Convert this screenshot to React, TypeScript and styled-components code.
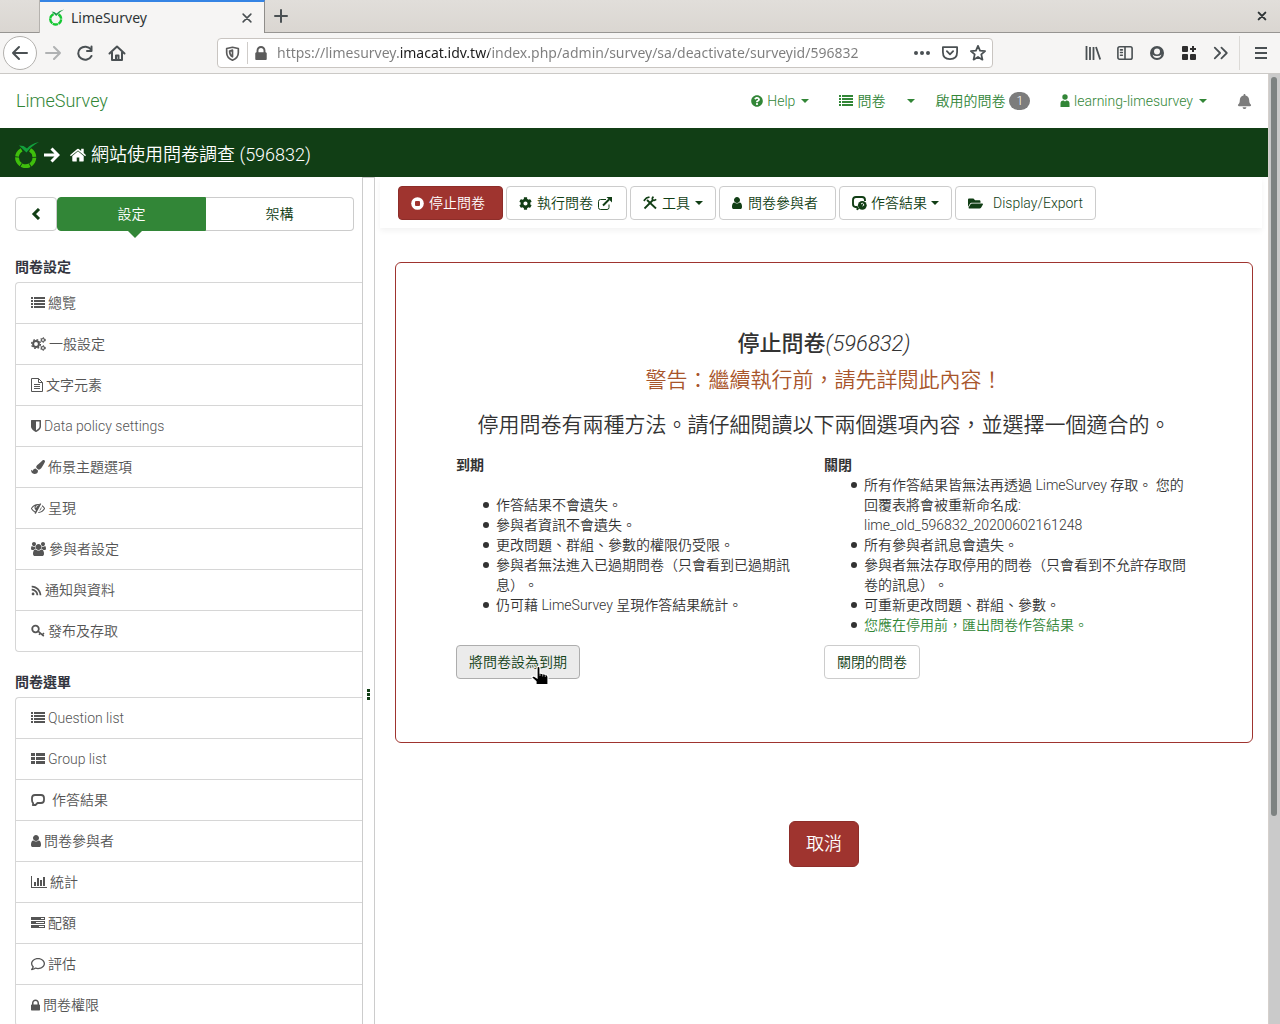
import React from "react";
import styled, { createGlobalStyle, css } from "styled-components";
import {
  FaBell,
  FaCog,
  FaFolderOpen,
  FaPaintBrush,
  FaQuestionCircle,
  FaRegComment,
  FaRss,
} from "react-icons/fa";

const colors = {
  green: "#328637",
  darkGreen: "#113e15",
  danger: "#9f342f",
  line: "#cccccc",
  text: "#333333",
  muted: "#555555",
  chrome: "#f6f5f4",
  chromeInk: "#4a5053",
};

const GlobalStyle = createGlobalStyle`
  *, *::before, *::after { box-sizing: border-box; }
  body {
    margin: 0;
    background: #fff;
    color: ${colors.text};
    font: 350 14px/20px Roboto, "Noto Sans CJK TC", sans-serif;
    text-spacing-trim: space-all;
  }
  button, input { font: inherit; }
  a { color: inherit; text-decoration: none; }
  svg { display: block; flex: none; }
`;

/* ---------- icons ---------- */

type IconProps = { w?: number; h?: number };

const Fa4 = ({ d, w = 14, h = 14, box = "0 0 1792 1792" }: IconProps & { d: string; box?: string }) => (
  <svg width={w} height={h} viewBox={box} fill="currentColor" aria-hidden="true">
    <path d={d} />
  </svg>
);

const UserIcon = () => (
  <Fa4
    w={10}
    h={12}
    box="256 128 1280 1536"
    d="M1536 1399q0 109-62.5 187t-150.5 78h-854q-88 0-150.5-78t-62.5-187q0-85 8.5-160.5t31.5-152 58.5-131 94-89 134.5-34.5q131 128 313 128t313-128q76 0 134.5 34.5t94 89 58.5 131 31.5 152 8.5 160.5zm-256-887q0 159-112.5 271.5t-271.5 112.5-271.5-112.5-112.5-271.5 112.5-271.5 271.5-112.5 271.5 112.5 112.5 271.5z"
  />
);

const UsersIcon = () => (
  <Fa4
    w={15}
    h={14}
    box="0 0 1920 1792"
    d="M593 896q-162 5-265 128h-134q-82 0-138-40.5t-56-118.5q0-353 124-353 6 0 43.5 21t97.5 42.5 119 21.5q67 0 133-23-5 37-5 66 0 139 81 256zm1071 637q0 120-73 189.5t-194 69.5h-874q-121 0-194-69.5t-73-189.5q0-53 3.5-103.5t14-109 26.5-108.5 43-97.5 62-81 85.5-53.5 111.5-20q10 0 43 21.5t73 48 107 48 135 21.5 135-21.5 107-48 73-48 43-21.5q61 0 111.5 20t85.5 53.5 62 81 43 97.5 26.5 108.5 14 109 3.5 103.5zm-1024-1277q0 106-75 181t-181 75-181-75-75-181 75-181 181-75 181 75 75 181zm704 384q0 159-112.5 271.5t-271.5 112.5-271.5-112.5-112.5-271.5 112.5-271.5 271.5-112.5 271.5 112.5 112.5 271.5zm576 225q0 78-56 118.5t-138 40.5h-134q-103-123-265-128 81-117 81-256 0-29-5-66 66 23 133 23 59 0 119-21.5t97.5-42.5 43.5-21q124 0 124 353zm-128-609q0 106-75 181t-181 75-181-75-75-181 75-181 181-75 181 75 75 181z"
  />
);

const PersonIcon = () => (
  <svg width="10" height="14" viewBox="0 0 10 14" fill="currentColor" aria-hidden="true">
    <circle cx="5" cy="3" r="2.7" />
    <path d="M.5 13V9.500q0-3 3-3h.3L5 7.500l1.200-1h.3q3 0 3 3V13z" />
  </svg>
);

const ShieldIcon = () => (
  <Fa4
    w={10}
    h={12}
    box="256 128 1280 1536"
    d="M1344 960v-640h-448v1137q119-63 213-137 235-184 235-360zm192-768v768q0 86-33.500 170.500t-83 150-118 127.500-126.500 103-121 77.500-89.500 49.500-42.500 20q-12 6-26 6t-26-6q-16-7-42.500-20t-89.500-49.500-121-77.500-126.500-103-118-127.500-83-150-33.500-170.500v-768q0-26 19-45t45-19h1152q26 0 45 19t19 45z"
  />
);

const LockIcon = ({ w = 9, h = 12 }: IconProps) => (
  <Fa4
    w={w}
    h={h}
    box="320 128 1152 1408"
    d="M640 768h512v-192q0-106-75-181t-181-75-181 75-75 181v192zm832 96v576q0 40-28 68t-68 28h-960q-40 0-68-28t-28-68v-576q0-40 28-68t68-28h32v-192q0-184 132-316t316-132 316 132 132 316v192h32q40 0 68 28t28 68z"
  />
);

const EyeSlashIcon = () => (
  <Fa4
    w={14}
    h={14}
    d="M555 1335l78-141q-87-63-136-159t-49-203q0-121 61-225-229 117-381 353 167 258 427 375zm389-759q0-20-14-34t-34-14q-125 0-214.500 89.500t-89.500 214.500q0 20 14 34t34 14 34-14 14-34q0-86 61-147t147-61q20 0 34-14t14-34zm363-191q0 7-1 9-106 189-316 567t-315 566l-49 89q-10 16-28 16-12 0-134-70-16-10-16-28 0-12 44-87-143-65-263.500-173t-208.500-245q-20-31-20-69t20-69q153-235 380-371t496-136q89 0 180 17l54-97q10-16 28-16 5 0 18 6t31 15.500 33 18.500 31.500 18.500 19.500 11.500q16 10 16 27zm37 447q0 139-79 253.500t-209 164.500l280-502q8 45 8 84zm448 128q0 35-20 69-39 64-109 145-150 172-347.500 267t-419.500 95l74-132q212-18 392.500-137t301.500-307q-115-179-282-294l63-112q95 64 182.500 153t144.500 184q20 34 20 69z"
  />
);

const HomeIcon = () => (
  <Fa4
    w={16}
    h={14}
    box="90 240 1612 1296"
    d="M1472 992v480q0 26-19 45t-45 19h-384v-384h-256v384h-384q-26 0-45-19t-19-45v-480q0-1 .5-3t.5-3l575-474 575 474q1 2 1 6zm223-69l-62 74q-8 9-21 11h-3q-13 0-21-7l-692-577-692 577q-12 8-24 7-13-2-21-11l-62-74q-8-10-7-23.500t11-21.500l719-599q32-26 76-26t76 26l244 204v-195q0-14 9-23t23-9h192q14 0 23 9t9 23v408l219 182q10 8 11 21.500t-7 23.500z"
  />
);

const ListIcon = () => (
  <svg width="14" height="12" viewBox="0 0 14 12" fill="currentColor" aria-hidden="true">
    <path d="M0 0h2v2H0zM3 0h11v2H3zM0 3h2v2H0zM3 3h11v2H3zM0 6h2v2H0zM3 6h11v2H3zM0 9h2v2H0zM3 9h11v2H3z" />
  </svg>
);

const ThListIcon = () => (
  <svg width="14" height="12" viewBox="0 0 14 12" fill="currentColor" aria-hidden="true">
    <path d="M0 0h4v3H0zM5 0h9v3H5zM0 4h4v3H0zM5 4h9v3H5zM0 8h4v3H0zM5 8h9v3H5z" />
  </svg>
);

const CogsIcon = () => (
  <svg width="15" height="14" viewBox="0 0 15 14" fill="none" stroke="currentColor" aria-hidden="true">
    <circle cx="5" cy="7" r="2.900" strokeWidth="2" />
    <circle cx="5" cy="7" r="4.400" strokeWidth="1.400" strokeDasharray="1.700 1.755" />
    <circle cx="12" cy="3" r="1.500" strokeWidth="1.200" />
    <circle cx="12" cy="3" r="2.400" strokeDasharray="1.200 1.300" />
    <circle cx="12" cy="11" r="1.500" strokeWidth="1.200" />
    <circle cx="12" cy="11" r="2.400" strokeDasharray="1.200 1.300" />
  </svg>
);

const FileIcon = () => (
  <svg width="12" height="14" viewBox="0 0 12 14" fill="none" stroke="currentColor" aria-hidden="true">
    <path d="M.5.500h7l4 4v9H.500zM7.500.500v4h4M3 6.500h6M3 8.500h6M3 10.500h6" />
  </svg>
);

const KeyIcon = () => (
  <svg width="14" height="14" viewBox="0 0 14 14" fill="none" stroke="currentColor" strokeWidth="1.800" aria-hidden="true">
    <circle cx="4.500" cy="5" r="3.300" />
    <path d="M7 7.200l5.800 5M9.300 9.200l-1.300 1.500M11.300 10.900l1.600-1.900" strokeWidth="1.600" />
  </svg>
);

const BubbleIcon = () => (
  <svg width="14" height="13" viewBox="0 0 14 13" fill="none" stroke="currentColor" strokeWidth="1.800" aria-hidden="true">
    <path d="M4 1h6q3 0 3 3v2q0 3-3 3H6.500L4.500 11H1.800q.8-1 .2-2Q1 8 1 6V4q0-3 3-3z" strokeLinejoin="round" />
  </svg>
);

const BarChartIcon = () => (
  <svg width="16" height="12" viewBox="0 0 16 12" fill="currentColor" aria-hidden="true">
    <path d="M0 0h1v11h15v1H0zM3 6h2v4H3zM6 2h2v8H6zM9 4h2v6H9zM12 1h2v9h-2z" />
  </svg>
);

const TasksIcon = () => (
  <svg width="14" height="12" viewBox="0 0 14 12" fill="currentColor" fillRule="evenodd" aria-hidden="true">
    <path d="M0 0h14v3H0zM10 1v1h3V1zM0 4h14v3H0zM5 5v1h8V5zM0 8h14v3H0zM8 9v1h5V9z" />
  </svg>
);

const StopIcon = () => (
  <svg width="13" height="13" viewBox="0 0 13 13" aria-hidden="true">
    <circle cx="6.500" cy="6.500" r="6.300" fill="currentColor" />
    <rect x="4" y="4" width="5" height="5" rx="1" fill={colors.danger} />
  </svg>
);

const ExternalIcon = () => (
  <svg width="14" height="13" viewBox="0 0 14 13" fill="none" stroke="currentColor" aria-hidden="true">
    <path d="M8 2.500H2.500q-2 0-2 2v6q0 2 2 2H9q2 0 2-2V7.500" />
    <path d="M5 8.500l6-6" strokeWidth="1.900" />
    <path d="M8.500 0H14v5.500z" fill="currentColor" stroke="none" />
  </svg>
);

const ToolsIcon = () => (
  <svg width="14" height="14" viewBox="0 0 14 14" fill="none" stroke="currentColor" aria-hidden="true">
    <path d="M1.500 12.500l8.500-8.500" strokeWidth="1.800" />
    <path d="M10.500 .8q-2 1.500-.8 3t3.500-.4" strokeWidth="1.700" />
    <path d="M4 4l9 8.500" strokeWidth="1.800" />
    <path d="M.8 4.800L3.500 2l3-1" strokeWidth="1.700" />
  </svg>
);

const ResponsesIcon = () => (
  <svg width="15" height="15" viewBox="0 0 15 15" fill="none" stroke="currentColor" aria-hidden="true">
    <path d="M5 11H3.500Q1 11 1 8V4q0-3 3-3h6q3 0 3 3v1" strokeWidth="1.900" />
    <path d="M5 10v4l2-1.500" fill="currentColor" strokeWidth="1" />
    <circle cx="10.300" cy="9.300" r="4.400" fill="currentColor" stroke="none" />
    <path d="M9 8q1.500-1.500 2.500 0t-1 2" stroke="#fff" strokeWidth="1" />
  </svg>
);

const ArrowRightBold = () => (
  <svg width="16" height="16" viewBox="0 0 16 16" fill="none" stroke="currentColor" strokeWidth="3" aria-hidden="true">
    <path d="M0 8h13M7.500 1.500L14 8l-6.500 6.500" />
  </svg>
);

const ChevronLeftBold = () => (
  <svg width="10" height="12" viewBox="0 0 10 12" fill="none" stroke="currentColor" strokeWidth="3" aria-hidden="true">
    <path d="M8 1L3 6l5 5" />
  </svg>
);

const LimeLogo = ({ size, ring, leaf }: { size: number; ring: string; leaf: string }) => (
  <svg width={size} height={Math.round(size * 1.1)} viewBox="0 0 24 26" fill="none" aria-hidden="true">
    <circle
      cx="10.700"
      cy="15.500"
      r="8.700"
      stroke={ring}
      strokeWidth="3.800"
      strokeDasharray="8.400 .9 8.400 .9 8.400 .9 8.400 .9 8.400 9.100"
      transform="rotate(-60 10.700 15.500)"
    />
    <path d="M4 3.500l4.500.5L12 6.500Q16 1.500 24 0q-7.500 4-12.500 10.500z" fill={leaf} />
  </svg>
);

/* ---------- browser window ---------- */

const Window = styled.div`
  display: flex;
  flex-direction: column;
  height: 100vh;
  overflow: hidden;
`;

const TabStrip = styled.header`
  display: flex;
  flex: none;
  height: 33px;
  background: linear-gradient(#e1deda, #dad6d1);
  box-shadow: inset 0 -1px #979592;
  font: 400 14px/20px "Noto Sans", sans-serif;
`;

const StripLead = styled.div`
  width: 40px;
  border-right: 1px solid #b5b2ae;
`;

const BrowserTab = styled.div`
  display: flex;
  align-items: center;
  gap: 7px;
  width: 225px;
  padding: 0 9px;
  border-top: 2px solid #3584e4;
  border-right: 1px solid #8f8d8a;
  background: ${colors.chrome};
  color: #2e3436;

  span { flex: 1; }
`;

const ChromeButton = styled.button<{ $faded?: boolean; $w?: number }>`
  display: flex;
  align-items: center;
  justify-content: center;
  width: ${(p) => p.$w ?? 32}px;
  height: 32px;
  padding: 0;
  border: 0;
  background: none;
  color: ${colors.chromeInk};
  opacity: ${(p) => (p.$faded ? 0.4 : 1)};
`;

const BackButton = styled(ChromeButton)`
  width: 34px;
  height: 34px;
  border: 1px solid #b3b1ae;
  border-radius: 50%;
  background: #fff;
`;

const WindowClose = styled(ChromeButton)`
  margin-left: auto;
  margin-right: 2px;
  color: #2e3436;
`;

const NavRow = styled.div`
  display: flex;
  align-items: center;
  flex: none;
  height: 41px;
  padding: 0 3px;
  border-bottom: 1px solid #cbc9c6;
  background: ${colors.chrome};
`;

const AddressBar = styled.div`
  display: flex;
  align-items: center;
  flex: 1;
  height: 30px;
  margin: 0 84px;
  padding: 0 0 0 7px;
  border: 1px solid #c9c5c1;
  border-radius: 4px;
  background: #fff;
  color: #5b5b5b;
`;

const AddressDivider = styled.span`
  width: 1px;
  height: 22px;
  margin: 0 7px;
  background: #cfccc9;
`;

const AddressInput = styled.input`
  flex: 1;
  min-width: 0;
  margin-left: 10px;
  padding: 0;
  border: 0;
  outline: 0;
  font: 400 14px/24px "Noto Sans", sans-serif;
  color: transparent;
  background: linear-gradient(to right, #7d7d7d 123px, #1c1c1c 123px, #1c1c1c 212px, #7d7d7d 212px);
  -webkit-background-clip: text;
  background-clip: text;
`;

const MenuDivider = styled.span`
  width: 1px;
  height: 34px;
  margin: 0 5px 0 2px;
  background: #dcdad7;
`;

const Stroke = ({ d, w = 18, sw = 2, children }: { d: string; w?: number; sw?: number; children?: React.ReactNode }) => (
  <svg width={w} height={w} viewBox="0 0 18 18" fill="none" stroke="currentColor" strokeWidth={sw} strokeLinejoin="round" strokeLinecap="round" aria-hidden="true">
    <path d={d} />
    {children}
  </svg>
);

const BrowserChrome = () => (
  <>
    <TabStrip>
      <StripLead />
      <BrowserTab>
        <LimeLogo size={15} ring="#14c832" leaf="#1a9c48" />
        <span>LimeSurvey</span>
        <ChromeButton $w={16} aria-label="Close tab"><Stroke w={14} d="M4 4l10 10M14 4L4 14" /></ChromeButton>
      </BrowserTab>
      <ChromeButton aria-label="New tab"><Stroke w={18} d="M9 3v12M3 9h12" /></ChromeButton>
      <WindowClose aria-label="Close window"><Stroke w={12} sw={3} d="M4 4l10 10M14 4L4 14" /></WindowClose>
    </TabStrip>
    <NavRow>
      <BackButton aria-label="Back"><Stroke d="M2 9h14M8 3L2 9l6 6" /></BackButton>
      <ChromeButton $faded aria-label="Forward"><Stroke d="M2 9h14M10 3l6 6-6 6" /></ChromeButton>
      <ChromeButton aria-label="Reload"><Stroke d="M15 5.500A7 6.500 0 1 0 15.500 12M15.500 2.500V7H11" /></ChromeButton>
      <ChromeButton aria-label="Home"><Stroke d="M1.500 9.500L9 2.500l7.500 7M4 8.500V16h10V8.500M8 16v-4.500h2.500V16" /></ChromeButton>
      <AddressBar>
        <Stroke w={15} sw={2} d="M9 1.500L2 3v5q0 6 7 9 7-3 7-9V3zM9 5v8q-3.500-2-3.500-7z" />
        <AddressDivider />
        <LockIcon w={12} h={14} />
        <AddressInput aria-label="Address" defaultValue="https://limesurvey.imacat.idv.tw/index.php/admin/survey/sa/deactivate/surveyid/596832" />
        <ChromeButton $w={28} aria-label="Page actions">
          <svg width="16" height="4" fill="currentColor"><circle cx="2" cy="2" r="2" /><circle cx="8" cy="2" r="2" /><circle cx="14" cy="2" r="2" /></svg>
        </ChromeButton>
        <ChromeButton $w={28} aria-label="Save to Pocket"><Stroke w={16} d="M1 2.500h16V8q0 8-8 8T1 8zM5.500 7L9 10.500 12.500 7" /></ChromeButton>
        <ChromeButton $w={28} aria-label="Bookmark"><Stroke w={16} d="M9 1l2.300 5.300 5.700.5-4.300 3.800L14 16.500 9 13.500 4 16.500l1.300-5.900L1 6.800l5.700-.5z" /></ChromeButton>
      </AddressBar>
      <ChromeButton aria-label="Library">
        <svg width="16" height="14" viewBox="0 0 16 14" fill="none" stroke="currentColor" strokeWidth="1.800"><path d="M1.500 0v14M5 1v13M8.500 1v13M11 1l4.200 12.500" /></svg>
      </ChromeButton>
      <ChromeButton aria-label="Sidebars"><Stroke w={16} d="M3 2h12q2 0 2 2v10q0 2-2 2H3q-2 0-2-2V4q0-2 2-2zM9 2v14M4 5.500h2M4 8.500h2M4 11.500h2" sw={1.800} /></ChromeButton>
      <ChromeButton aria-label="Account">
        <svg width="14" height="14" viewBox="0 0 14 14" aria-hidden="true">
          <circle cx="7" cy="7" r="7" fill="currentColor" />
          <circle cx="7" cy="5.500" r="3" fill={colors.chrome} />
          <path d="M2.500 8.500Q4 10 7 10t4.500-1.500Q10.500 12 7 12T2.500 8.500z" fill={colors.chrome} />
        </svg>
      </ChromeButton>
      <ChromeButton aria-label="Extensions">
        <svg width="14" height="14" viewBox="0 0 14 14" fill="#2e2e2e"><rect width="6" height="6" rx="1" /><rect y="8" width="6" height="6" rx="1" /><rect x="8" y="8" width="6" height="6" rx="1" /><path d="M10 0h2v2h2v2h-2v2h-2V4H8V2h2z" /></svg>
      </ChromeButton>
      <ChromeButton aria-label="More tools"><Stroke w={16} d="M2 3l6 6-6 6M9.500 3l6 6-6 6" /></ChromeButton>
      <MenuDivider />
      <ChromeButton aria-label="Menu">
        <svg width="12" height="12" viewBox="0 0 12 12" fill="currentColor"><path d="M0 0h12v2H0zM0 5h12v2H0zM0 10h12v2H0z" /></svg>
      </ChromeButton>
    </NavRow>
  </>
);

/* ---------- page frame ---------- */

const Viewport = styled.div`
  display: flex;
  flex: 1;
  min-height: 0;
`;

const Page = styled.div`
  display: flex;
  flex-direction: column;
  flex: 1;
  min-width: 0;
`;

const ScrollTrack = styled.div`
  flex: none;
  width: 12px;
  padding: 3px 3px 0 2px;
  border-left: 1px solid #d5d0cc;
  background: #cacaca;
`;

const ScrollThumb = styled.div`
  height: 78%;
  border-radius: 3px;
  background: #7e8382;
`;

const TopBar = styled.nav`
  display: flex;
  align-items: center;
  flex: none;
  height: 54px;
  padding: 0 16px;
  color: ${colors.green};
`;

const Brand = styled.a`
  margin-right: auto;
  font-size: 18px;
`;

const TopLink = styled.a<{ $gap?: number }>`
  display: flex;
  align-items: center;
  gap: 4px;
  margin-left: ${(p) => p.$gap ?? 30}px;
`;

const Caret = styled.span`
  margin-left: 2px;
  border: 4px solid transparent;
  border-top-color: currentColor;
  border-bottom: 0;
`;

const Badge = styled.span`
  padding: 0 7px;
  border-radius: 10px;
  background: #7c7c7c;
  color: #fff;
  font-size: 12px;
  line-height: 18px;
`;

const BellLink = styled(TopLink)`
  color: #7c7c7c;
`;

const TitleBar = styled.div`
  display: flex;
  align-items: center;
  flex: none;
  height: 49px;
  padding: 4px 15px 0;
  background: ${colors.darkGreen};
  color: #fff;
  font-size: 18px;
`;

const TitleLink = styled.a`
  display: flex;
  align-items: center;
  gap: 5px;
  margin-left: 10px;
`;

const ArrowSlot = styled.span`
  margin-left: 5px;
`;

const Body = styled.div`
  display: flex;
  flex: 1;
  min-height: 0;
`;

/* ---------- sidebar ---------- */

const Sidebar = styled.aside`
  flex: none;
  width: 362px;
  padding: 20px 0 0 15px;
  overflow: hidden;
`;

const buttonBase = css`
  display: inline-flex;
  align-items: center;
  height: 34px;
  padding: 0 12px;
  border: 1px solid ${colors.line};
  border-radius: 4px;
  background: #fff;
  color: ${colors.darkGreen};
  white-space: nowrap;
`;

const SideTabs = styled.div`
  display: flex;
  padding: 0 8px 6px 0;
`;

const CollapseButton = styled.button`
  ${buttonBase}
  justify-content: center;
  width: 42px;
`;

const SideTab = styled.button<{ $active?: boolean }>`
  ${buttonBase}
  position: relative;
  flex: 1;
  justify-content: center;
  border-radius: ${(p) => (p.$active ? "4px 0 0 4px" : "0 4px 4px 0")};
  ${(p) =>
    p.$active
      ? css`
          border-color: ${colors.green};
          background: ${colors.green};
          color: #fff;

          &::after {
            content: "";
            position: absolute;
            top: 100%;
            left: 50%;
            border: 8px solid transparent;
            border-top-color: ${colors.green};
            border-bottom: 0;
            transform: translateX(-5px);
          }
        `
      : css`
          border-left-width: 0;
        `}
`;

const MenuHeading = styled.h2`
  margin: 20px 0 5px;
  color: #333640;
  font-size: 14px;
  font-weight: 700;
  line-height: 20px;
`;

const Menu = styled.ul`
  margin: 0;
  padding: 0;
  list-style: none;
  border: 1px solid #d6d6d6;
  border-right: 0;
  border-radius: 4px 0 0 4px;
`;

const MenuItem = styled.li`
  & + & { border-top: 1px solid #d6d6d6; }
`;

const MenuLink = styled.a<{ $gap?: number }>`
  display: flex;
  align-items: center;
  gap: ${(p) => p.$gap ?? 3}px;
  height: 40px;
  padding: 0 15px;
  color: ${colors.muted};
`;

const Splitter = styled.div`
  display: flex;
  align-items: center;
  flex: none;
  width: 13px;
  padding: 187px 0 0 4px;
  border: 1px solid ${colors.line};
  border-bottom: 0;
  color: ${colors.darkGreen};
`;

type Entry = { icon: React.ReactNode; label: string; gap?: number };

const settingsMenu: Entry[] = [
  { icon: <ListIcon />, label: "總覽" },
  { icon: <CogsIcon />, label: "一般設定" },
  { icon: <FileIcon />, label: "文字元素" },
  { icon: <ShieldIcon />, label: "Data policy settings" },
  { icon: <FaPaintBrush size={14} />, label: "佈景主題選項" },
  { icon: <EyeSlashIcon />, label: "呈現" },
  { icon: <UsersIcon />, label: "參與者設定" },
  { icon: <FaRss size={11} />, label: "通知與資料" },
  { icon: <KeyIcon />, label: "發布及存取" },
];

const surveyMenu: Entry[] = [
  { icon: <ListIcon />, label: "Question list" },
  { icon: <ThListIcon />, label: "Group list" },
  { icon: <BubbleIcon />, label: "作答結果", gap: 7 },
  { icon: <UserIcon />, label: "問卷參與者" },
  { icon: <BarChartIcon />, label: "統計" },
  { icon: <TasksIcon />, label: "配額" },
  { icon: <FaRegComment size={14} />, label: "評估" },
  { icon: <LockIcon />, label: "問卷權限" },
];

const SideMenu = ({ title, items }: { title: string; items: Entry[] }) => (
  <section>
    <MenuHeading>{title}</MenuHeading>
    <Menu>
      {items.map((item) => (
        <MenuItem key={item.label}>
          <MenuLink href="#" $gap={item.gap}>
            {item.icon}
            {item.label}
          </MenuLink>
        </MenuItem>
      ))}
    </Menu>
  </section>
);

/* ---------- main area ---------- */

const Main = styled.main`
  flex: 1;
  min-width: 0;
`;

const Toolbar = styled.div`
  display: flex;
  gap: 3px;
  margin: 0 6px 0 5px;
  padding: 9px 18px 8px;
  box-shadow: 0 3px 6px rgba(0, 0, 0, 0.05);
`;

const ToolButton = styled.button<{ $danger?: boolean; $gap?: number; $end?: number }>`
  ${buttonBase}
  gap: ${(p) => p.$gap ?? 5}px;
  padding-right: ${(p) => p.$end ?? 12}px;
  ${(p) =>
    p.$danger &&
    css`
      border-color: #8d2d29;
      background: ${colors.danger};
      color: #fff;
    `}

  ${Caret} { margin-left: 0; }
`;

const Panel = styled.section`
  margin: 34px 15px 0 20px;
  padding: 65px 60px 63px;
  border: 1px solid ${colors.danger};
  border-radius: 6px;
`;

const PanelTitle = styled.h1`
  margin: 0;
  font-size: 22px;
  font-weight: 500;
  line-height: 32px;
  text-align: center;

  em { font-weight: 300; }
`;

const Lead = styled.p<{ $warning?: boolean }>`
  margin: ${(p) => (p.$warning ? "4px 0 13px" : "0 0 14px")};
  color: ${(p) => (p.$warning ? "#a8552a" : "inherit")};
  font-size: 21px;
  line-height: 32px;
  text-align: center;
`;

const Choices = styled.div`
  display: grid;
  grid-template-columns: 1fr 1fr;
`;

const Choice = styled.div`
  display: flex;
  flex-direction: column;
  align-items: flex-start;
`;

const ChoiceTitle = styled.h2`
  margin: 0;
  font-size: 14px;
  font-weight: 700;
  line-height: 20px;
`;

const Points = styled.ul<{ $spaced?: boolean }>`
  margin: ${(p) => (p.$spaced ? "20px 0 30px" : "0 0 10px")};
  padding-left: 40px;
  list-style: none;
`;

const Point = styled.li`
  position: relative;

  &::before {
    content: "";
    position: absolute;
    top: 7px;
    left: -13px;
    width: 6px;
    height: 6px;
    border-radius: 50%;
    background: ${colors.text};
  }
`;

const Highlight = styled.span`
  color: ${colors.green};
`;

const ChoiceButton = styled.button<{ $hovered?: boolean }>`
  ${buttonBase}
  position: relative;
  ${(p) =>
    p.$hovered &&
    css`
      border-color: #adadad;
      background: #ebebeb;
    `}
`;

const Pointer = styled.span`
  position: absolute;
  top: 20px;
  left: 74px;
`;

const Actions = styled.div`
  display: flex;
  justify-content: center;
  margin: 78px 15px 0 20px;
`;

const CancelButton = styled.button`
  height: 46px;
  padding: 0 16px;
  border: 1px solid #8d2d29;
  border-radius: 6px;
  background: ${colors.danger};
  color: #fff;
  font-size: 18px;
`;

const HandPointer = () => (
  <svg width="18" height="20" viewBox="0 0 18 20" aria-hidden="true">
    <path d="M6 2q0-1.500 1.500-1.500T9 2v5l6 1.500q2 .5 2 2.500v7.500H5v-3L1 12q-.5-2 2-2l3 2z" fill="#000" stroke="#fff" strokeWidth="1.200" />
    <path d="M9 7v3M11.700 8v2.500M14.300 9v2" stroke="#fff" strokeWidth=".6" />
  </svg>
);

export default function App() {
  return (
    <Window>
      <GlobalStyle />
      <BrowserChrome />
      <Viewport>
        <Page>
          <TopBar>
            <Brand href="#">LimeSurvey</Brand>
            <TopLink href="#"><FaQuestionCircle size={12} />Help<Caret /></TopLink>
            <TopLink href="#"><ListIcon />問卷</TopLink>
            <TopLink href="#" $gap={20} aria-label="More surveys"><Caret /></TopLink>
            <TopLink href="#" $gap={20}>啟用的問卷<Badge>1</Badge></TopLink>
            <TopLink href="#"><PersonIcon />learning-limesurvey<Caret /></TopLink>
            <BellLink href="#" aria-label="Notifications"><FaBell size={15} /></BellLink>
          </TopBar>
          <TitleBar>
            <LimeLogo size={24} ring="#3fbf0c" leaf="#12a03c" />
            <ArrowSlot><ArrowRightBold /></ArrowSlot>
            <TitleLink href="#"><HomeIcon />網站使用問卷調查 (596832)</TitleLink>
          </TitleBar>
          <Body>
            <Sidebar>
              <SideTabs>
                <CollapseButton aria-label="Collapse"><ChevronLeftBold /></CollapseButton>
                <SideTab $active>設定</SideTab>
                <SideTab>架構</SideTab>
              </SideTabs>
              <SideMenu title="問卷設定" items={settingsMenu} />
              <SideMenu title="問卷選單" items={surveyMenu} />
            </Sidebar>
            <Splitter>
              <svg width="3" height="11" viewBox="0 0 3 11" fill="currentColor" aria-hidden="true"><path d="M0 0h3v3H0zM0 4h3v3H0zM0 8h3v3H0z" /></svg>
            </Splitter>
            <Main>
              <Toolbar>
                <ToolButton $danger $end={17}><StopIcon />停止問卷</ToolButton>
                <ToolButton $end={14} $gap={5}><FaCog size={13} />執行問卷<ExternalIcon /></ToolButton>
                <ToolButton $gap={5}><ToolsIcon />工具<Caret /></ToolButton>
                <ToolButton $gap={6} $end={17}><UserIcon />問卷參與者</ToolButton>
                <ToolButton $gap={4}><ResponsesIcon />作答結果<Caret /></ToolButton>
                <ToolButton $gap={10}><FaFolderOpen size={15} />Display/Export</ToolButton>
              </Toolbar>
              <Panel>
                <PanelTitle>停止問卷<em>(596832)</em></PanelTitle>
                <Lead $warning>警告：繼續執行前，請先詳閱此內容！</Lead>
                <Lead>停用問卷有兩種方法。請仔細閱讀以下兩個選項內容，並選擇一個適合的。</Lead>
                <Choices>
                  <Choice>
                    <ChoiceTitle>到期</ChoiceTitle>
                    <Points $spaced>
                      <Point>作答結果不會遺失。</Point>
                      <Point>參與者資訊不會遺失。</Point>
                      <Point>更改問題、群組、參數的權限仍受限。</Point>
                      <Point>參與者無法進入已過期問卷（只會看到已過期訊息）。</Point>
                      <Point>仍可藉 LimeSurvey 呈現作答結果統計。</Point>
                    </Points>
                    <ChoiceButton $hovered>
                      將問卷設為到期
                      <Pointer><HandPointer /></Pointer>
                    </ChoiceButton>
                  </Choice>
                  <Choice>
                    <ChoiceTitle>關閉</ChoiceTitle>
                    <Points>
                      <Point>所有作答結果皆無法再透過 LimeSurvey 存取。 您的回覆表將會被重新命名成: lime_old_596832_20200602161248</Point>
                      <Point>所有參與者訊息會遺失。</Point>
                      <Point>參與者無法存取停用的問卷（只會看到不允許存取問卷的訊息）。</Point>
                      <Point>可重新更改問題、群組、參數。</Point>
                      <Point><Highlight>您應在停用前，匯出問卷作答結果。</Highlight></Point>
                    </Points>
                    <ChoiceButton>關閉的問卷</ChoiceButton>
                  </Choice>
                </Choices>
              </Panel>
              <Actions>
                <CancelButton>取消</CancelButton>
              </Actions>
            </Main>
          </Body>
        </Page>
        <ScrollTrack><ScrollThumb /></ScrollTrack>
      </Viewport>
    </Window>
  );
}
